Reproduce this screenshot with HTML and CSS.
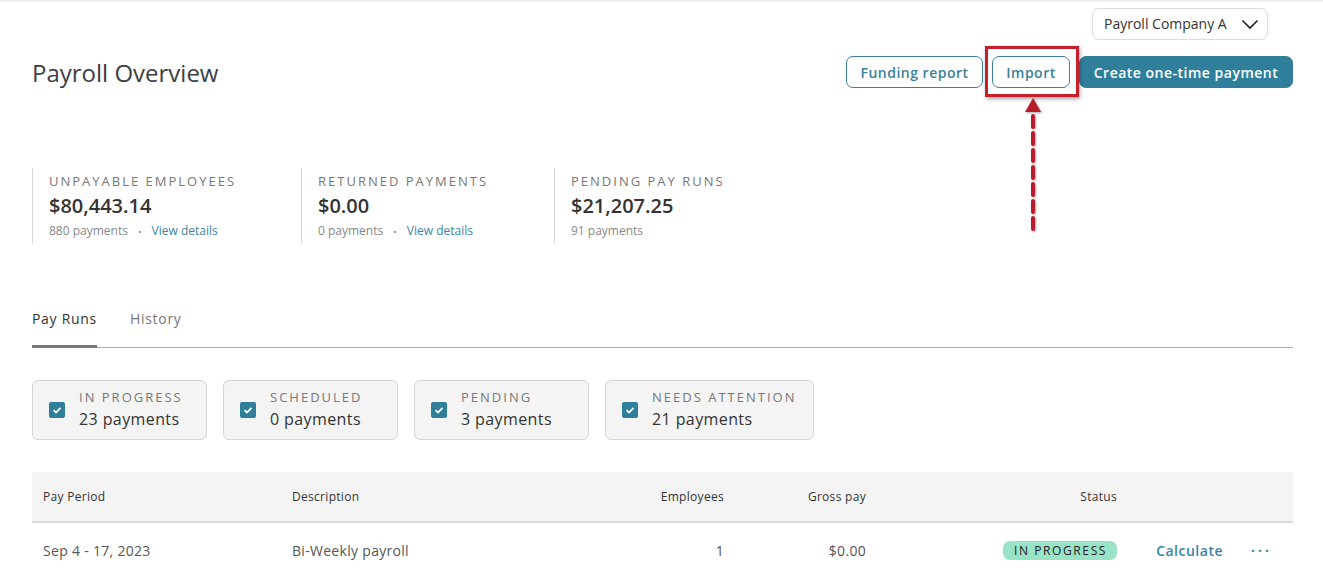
FILE: index.html
```html
<!DOCTYPE html>
<html>
<head>
<meta charset="utf-8">
<link rel="stylesheet" href="styles.css">
</head>
<body>
<div class="topline"></div>
<div class="page">
  <div class="company-row">
    <div class="select">
      <span>Payroll Company A</span>
      <svg width="18" height="12" viewBox="0 0 18 12"><path d="M1.5 2.5 L9 10 L16.5 2.5" fill="none" stroke="#222" stroke-width="1.6"/></svg>
    </div>
  </div>
  <div class="title-row">
    <h1 class="title">Payroll Overview</h1>
    <div class="actions">
      <button class="btn btn-outline">Funding report</button>
      <div class="import-wrap">
        <button class="btn btn-outline btn-import">Import</button>
        <div class="highlight"></div>
        <div class="arrow">
          <svg width="24" height="140" viewBox="0 0 24 140">
            <defs>
              <filter id="sh" x="-50%" y="-10%" width="200%" height="120%">
                <feDropShadow dx="1" dy="1" stdDeviation="1.2" flood-color="#000" flood-opacity="0.35"/>
              </filter>
            </defs>
            <g filter="url(#sh)">
              <polygon points="12,2 4,16 20,16" fill="#b71f2c"/>
              <line x1="12" y1="20" x2="12" y2="134" stroke="#b71f2c" stroke-width="4" stroke-dasharray="11 6" stroke-linecap="round"/>
            </g>
          </svg>
        </div>
      </div>
      <button class="btn btn-primary">Create one-time payment</button>
    </div>
  </div>

  <div class="stats">
    <div class="stat stat-1">
      <div class="stat-label">Unpayable employees</div>
      <div class="stat-value">$80,443.14</div>
      <div class="stat-sub">880 payments <span class="dot">•</span> <a class="link">View details</a></div>
    </div>
    <div class="stat stat-2">
      <div class="stat-label">Returned payments</div>
      <div class="stat-value">$0.00</div>
      <div class="stat-sub">0 payments <span class="dot">•</span> <a class="link">View details</a></div>
    </div>
    <div class="stat">
      <div class="stat-label">Pending pay runs</div>
      <div class="stat-value">$21,207.25</div>
      <div class="stat-sub">91 payments</div>
    </div>
  </div>

  <div class="tabs">
    <div class="tab active">Pay Runs</div>
    <div class="tab">History</div>
  </div>

  <div class="filters">
    <div class="filter f1">
      <span class="check"><svg width="16" height="16" viewBox="0 0 16 16"><path d="M4.5 8.2 L7 10.5 L11.5 5.8" fill="none" stroke="#fff" stroke-width="1.8"/></svg></span>
      <div class="filter-text"><div class="filter-label">In progress</div><div class="filter-count">23 payments</div></div>
    </div>
    <div class="filter f2">
      <span class="check"><svg width="16" height="16" viewBox="0 0 16 16"><path d="M4.5 8.2 L7 10.5 L11.5 5.8" fill="none" stroke="#fff" stroke-width="1.8"/></svg></span>
      <div class="filter-text"><div class="filter-label">Scheduled</div><div class="filter-count">0 payments</div></div>
    </div>
    <div class="filter f3">
      <span class="check"><svg width="16" height="16" viewBox="0 0 16 16"><path d="M4.5 8.2 L7 10.5 L11.5 5.8" fill="none" stroke="#fff" stroke-width="1.8"/></svg></span>
      <div class="filter-text"><div class="filter-label">Pending</div><div class="filter-count">3 payments</div></div>
    </div>
    <div class="filter f4">
      <span class="check"><svg width="16" height="16" viewBox="0 0 16 16"><path d="M4.5 8.2 L7 10.5 L11.5 5.8" fill="none" stroke="#fff" stroke-width="1.8"/></svg></span>
      <div class="filter-text"><div class="filter-label">Needs attention</div><div class="filter-count">21 payments</div></div>
    </div>
  </div>

  <div class="table">
    <div class="row head">
      <div class="c c-period">Pay Period</div>
      <div class="c c-desc">Description</div>
      <div class="c c-emp">Employees</div>
      <div class="c c-gross">Gross pay</div>
      <div class="c c-status">Status</div>
      <div class="c c-action"></div>
      <div class="c c-more"></div>
    </div>
    <div class="row body">
      <div class="c c-period">Sep 4 - 17, 2023</div>
      <div class="c c-desc">Bi-Weekly payroll</div>
      <div class="c c-emp">1</div>
      <div class="c c-gross">$0.00</div>
      <div class="c c-status"><span class="badge">In progress</span></div>
      <div class="c c-action"><a class="calc">Calculate</a></div>
      <div class="c c-more">···</div>
    </div>
  </div>
</div>
</body>
</html>
```

FILE: styles.css
```css
* { box-sizing: border-box; }
html, body { margin: 0; padding: 0; background: #fff; }
body {
  font-family: "Open Sans", "Noto Sans", sans-serif;
  color: #333;
  width: 1323px;
  height: 568px;
  overflow: hidden;
}
.topline { height: 2px; background: #f0f0f0; }
.page { padding: 0 30px 0 32px; }

.company-row { display: flex; justify-content: flex-end; padding-top: 6px; padding-right: 25px; }
.select {
  display: flex; align-items: center; gap: 8px;
  height: 32px; width: 176px;
  border: 1px solid #ddd; border-radius: 7px;
  padding: 0 8px 2px 11px;
  font-size: 14px; color: #333;
  white-space: nowrap;
}
.select svg { margin-left: auto; flex: none; margin-top: 2px; }

.title-row { display: flex; align-items: center; justify-content: space-between; margin-top: 16px; height: 32px; }
.title { margin: 0; font-size: 24px; font-weight: 400; color: #3b4045; letter-spacing: 0; }
.actions { display: flex; gap: 9px; }
.import-wrap { position: relative; }
.btn {
  height: 32px; border-radius: 7px; font-family: inherit;
  font-size: 14px; font-weight: 600; padding: 0 14px; cursor: pointer;
  letter-spacing: 0.5px; white-space: nowrap;
}
.btn-outline { background: #fff; border: 1px solid #3a7f9c; color: #3a7f9c; width: 137px; padding: 0; }
.btn-import { width: 78px; display: block; }
.btn-primary { background: #2f7f9b; border: 1px solid #2f7f9b; color: #fff; width: 214px; padding: 0; }
.highlight {
  position: absolute; left: -7px; top: -10px; width: 94px; height: 51px;
  border: 3px solid #c8202b;
  box-shadow: 1px 2px 4px rgba(0,0,0,0.35);
}
.arrow { position: absolute; left: 29px; top: 40px; }

.stats { display: flex; margin-top: 80px; }
.stat { border-left: 1px solid #d8d8d8; padding: 4px 0 5px 16px; height: 76px; }
.stat-1 { width: 269px; }
.stat-2 { width: 253px; }
.stat-label { font-size: 13px; letter-spacing: 2px; text-transform: uppercase; color: #777; line-height: 18px; }
.stat-value { font-size: 20px; font-weight: 600; color: #333; line-height: 26px; margin-top: 3px; }
.stat-sub { font-size: 12px; color: #888; line-height: 18px; margin-top: 3px; }
.dot { margin: 0 7px; font-size: 9px; color: #888; }
.link { color: #3a85a6; text-decoration: none; }

.tabs { display: flex; margin-top: 63px; border-bottom: 1px solid #aaa; height: 41px; }
.tab { font-size: 14px; color: #777; padding-top: 2px; margin-right: 33px; letter-spacing: 0.7px; }
.tab.active { color: #333; border-bottom: 3px solid #777; height: 41px; margin-bottom: -1px; }

.filters { display: flex; gap: 16px; margin-top: 32px; }
.filter {
  display: flex; align-items: center; gap: 14px;
  height: 60px; background: #f4f4f4; border: 1px solid #d6d6d6; border-radius: 6px;
  padding: 0 16px;
}
.f1 { width: 175px; }
.f2 { width: 175px; }
.f3 { width: 175px; }
.f4 { width: 209px; }
.check { width: 16px; height: 16px; background: #2f7f9b; border-radius: 2px; display: flex; }
.filter-text { margin-top: -2px; }
.filter-label { font-size: 13px; letter-spacing: 2px; text-transform: uppercase; color: #777; line-height: 18px; }
.filter-count { font-size: 16px; color: #333; line-height: 22px; margin-top: 2px; letter-spacing: 0.4px; }

.table { margin-top: 32px; }
.row { display: flex; align-items: center; }
.row.head { height: 51px; background: #f4f4f4; border-bottom: 2px solid #d9d9d9; font-size: 12px; color: #333; letter-spacing: 0.3px; }
.row.body { height: 54px; font-size: 14px; color: #555; letter-spacing: 0.3px; }
.c { flex: none; }
.c-period { width: 260px; padding-left: 11px; }
.c-desc { width: 250px; }
.c-emp { width: 182px; text-align: right; }
.c-gross { width: 142px; text-align: right; }
.c-status { width: 260px; text-align: right; padding-right: 9px; }
.c-action { width: 97px; text-align: right; }
.c-more { width: 61px; text-align: right; color: #3a85a6; font-weight: 700; letter-spacing: 3px; padding-right: 12px; font-size: 14px; }
.badge {
  display: inline-block; background: #99e3c7; color: #222; border-radius: 7px;
  font-size: 12px; letter-spacing: 1.6px; text-transform: uppercase; padding: 0 10px 0 11px; line-height: 19px; font-weight: 500;
}
.calc { color: #3a85a6; font-weight: 600; font-size: 14px; letter-spacing: 0.5px; }
```
